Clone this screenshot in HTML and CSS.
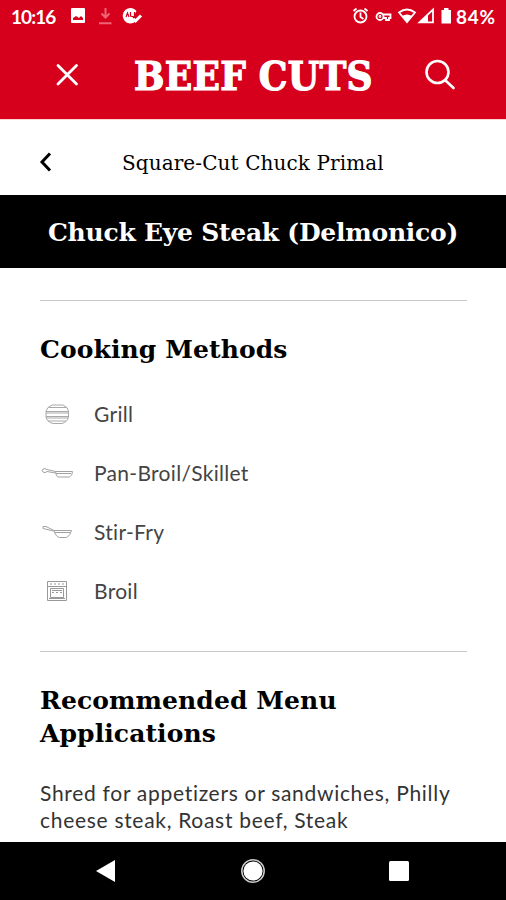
FILE: index.html
```html
<!DOCTYPE html>
<html lang="en">
<head>
<meta charset="utf-8">
<title>Beef Cuts</title>
<link rel="stylesheet" href="styles.css">
</head>
<body>
<div class="screen">
	<header class="header">
		<div class="status">
			<span class="time">10:16</span>
			<svg class="notices" width="76" height="20" viewBox="0 0 76 20">
				<path fill="#fff" fill-rule="evenodd" d="M2 2h12q1 0 1 1v13q0 1-1 1H2q-1 0-1-1V3q0-1 1-1zM3 14h10v-2l-2-2-2 2-3-2-3 2z"/>
				<path fill="none" stroke="#ec6475" stroke-width="2" d="M35.500 2v8M29 17.200h12.500M31.500 7.500l4 4 4-4"/>
				<path fill="#fff" d="M66.500 5a7.700 7.700 0 1 0-1 10.500l-3-3z"/>
				<path fill="none" stroke="#fff" stroke-width="3" d="M62 12l3.500 3 5.500-5.500"/>
				<path fill="none" stroke="#d6001c" stroke-width="1.200" d="M56 11l1.500-4 1.500 4M60.500 6v4l4 1v-5M63 12l3-2.500"/>
			</svg>
			<svg class="signals" width="102" height="20" viewBox="0 0 102 20">
				<g fill="none" stroke="#fff" stroke-width="1.800">
					<circle cx="9.500" cy="10.500" r="6"/>
					<path d="M9.500 6.500v4.500l3 2M2.500 5l3-2.500M16.500 5l-3-2.500"/>
					<circle cx="29" cy="10.500" r="3.500"/>
					<circle cx="29" cy="10.500" r=".5"/>
					<path d="M32 8.500h7.500v3.500h-1.500v2h-3v-2h-3"/>
					<path d="M48 6.500q8-6 16 0l-8 9.500z"/>
					<path d="M82 3.500v12.800H68.500z"/>
				</g>
				<path fill="#fff" d="M51 10q5-3 10 0l-5 6.500zM68 17l9-9v9zM93 2h4.500v2H100v13.500h-9.500V4H93z"/>
			</svg>
			<span class="battery">84%</span>
		</div>
		<div class="bar">
			<svg class="close" width="24" height="24" viewBox="0 0 24 24"><path fill="none" stroke="#fff" stroke-width="2.800" stroke-linecap="round" d="M3 2.500l18.500 18.500M21.500 2.500L3 21"/></svg>
			<h1 class="brand">BEEF CUTS</h1>
			<svg class="search" width="32" height="32" viewBox="0 0 32 32"><g fill="none" stroke="#fff" stroke-width="2.600" stroke-linecap="round"><circle cx="13.500" cy="13" r="11"/><path d="M21.500 21.500l8 7.500"/></g></svg>
		</div>
	</header>
	<div class="crumb">
		<svg class="back" width="14" height="20" viewBox="0 0 14 20"><path fill="none" stroke="#000" stroke-width="3" d="M12 1.500L4 10l8 8.500"/></svg>
		<span class="primal">Square-Cut Chuck Primal</span>
	</div>
	<h2 class="cut">Chuck Eye Steak (Delmonico)</h2>
	<main class="content">
		<section class="block">
			<h3 class="title">Cooking Methods</h3>
			<ul class="methods">
				<li>
					<svg width="34" height="24" viewBox="0 0 34 24"><path fill="none" stroke="#a9a9a9" d="M12 3h11q5 2 5.500 6v6q-1 5-6.500 6.500H13Q7 20 6 15V9q1-4 6-6zM9 5.500h17M6 9.500h22M6 11h22M6 14.500h22M6 16h22M8 19h18"/></svg>
					<span>Grill</span>
				</li>
				<li>
					<svg width="34" height="24" viewBox="0 0 34 24"><path fill="none" stroke="#a2a2a2" d="M15.500 10.500h17q0 4-3 5.500H18q-2-1-2.500-5.500zM15.500 12L7 10.500q-2 2-4 .5t0-3q2-1 4 .5l8.500 2M16 12.500h15"/></svg>
					<span>Pan-Broil/Skillet</span>
				</li>
				<li>
					<svg width="34" height="24" viewBox="0 0 34 24"><path fill="none" stroke="#a2a2a2" d="M14 10.500h17.500q-1 5-5 7h-7q-4-1-5.500-7zM13.500 11L3 8.500V6.500l3 0 8 4M14.500 12.500h16"/></svg>
					<span>Stir-Fry</span>
				</li>
				<li>
					<svg width="34" height="24" viewBox="0 0 34 24"><g fill="none" stroke="#999"><path d="M7.500 2.500h19v19h-19zM7.500 7.500h19M10.500 9.500h13v9h-13zM12 11.500h10M9 19.500h16"/><path stroke-dasharray="2 2" d="M10 5h15M12 13.500h10"/></g></svg>
					<span>Broil</span>
				</li>
			</ul>
		</section>
		<section class="block menu">
			<h3 class="title">Recommended Menu<br>Applications</h3>
			<p class="text">Shred for appetizers or sandwiches, Philly<br>cheese steak, Roast beef, Steak</p>
		</section>
	</main>
	<nav class="navbar">
		<svg width="20" height="22" viewBox="0 0 20 22"><path fill="#fff" d="M0 11L19 0v22z"/></svg>
		<svg width="26" height="26" viewBox="0 0 26 26"><circle cx="13" cy="13" r="11.200" fill="none" stroke="#ccc" stroke-width="1.500"/><circle cx="13" cy="13" r="9.600" fill="#fff"/></svg>
		<svg width="20" height="20" viewBox="0 0 20 20"><rect width="20" height="20" rx="1.500" fill="#fff"/></svg>
	</nav>
</div>
</body>
</html>
```
FILE: styles.css
```css
body,h1,h2,h3,ul,p{margin:0;padding:0;}
body{background:#fff;color:#000;}
svg{display:block;flex:none;}
.screen{width:506px;height:900px;overflow:hidden;display:flex;flex-direction:column;font-family:Lato,sans-serif;font-variant-ligatures:none;}
.header{height:119px;background:#d6001c;color:#fff;flex:none;border-bottom:1px solid #f9d5d5;}
.status{display:flex;align-items:center;height:32px;padding:0 9px 0 11px;font-size:19px;font-weight:bold;white-space:nowrap;}
.time{width:46px;letter-spacing:-.9px;}
.notices{margin:-1px 0 0 13px;}
.signals{margin:-1px 0 0 auto;}
.battery{margin-left:3px;width:41px;letter-spacing:.7px;}
.bar{display:flex;align-items:center;height:86px;padding:0 50px 0 55px;}
.brand,.primal,.cut,.title{font-family:"DejaVu Serif",serif;white-space:nowrap;}
.brand{font-family:"DejaVu Serif Condensed","DejaVu Serif",serif;font-stretch:condensed;font-size:40px;letter-spacing:.3px;line-height:48px;width:240px;margin:1px 0 0 55px;-webkit-text-stroke:1.2px #fff;}
.search{margin-left:auto;}
.crumb{display:flex;align-items:center;height:75px;padding-left:38px;flex:none;}
.crumb .back{margin-top:9px;}
.primal{font-size:20px;line-height:26px;letter-spacing:.1px;margin:10px 0 0 70px;}
.cut{height:73px;line-height:75px;background:#000;color:#fff;text-align:center;font-size:25px;letter-spacing:-.25px;flex:none;}
.content{flex:1;padding:32px 39px 0 40px;min-height:0;}
.block{border-top:1px solid #c9c9c9;height:350px;padding-top:32px;box-sizing:border-box;}
.block.menu{margin-top:1px;}
.title{font-size:25px;line-height:33px;letter-spacing:.1px;}
.methods{list-style:none;padding-top:18px;}
.methods li{display:flex;align-items:center;height:59px;font-size:21px;letter-spacing:.3px;color:#444;}
.methods span{margin-left:20px;}
.text{font-size:21px;line-height:27px;letter-spacing:.7px;color:#333;margin-top:29px;white-space:nowrap;}
.navbar{height:58px;background:#000;flex:none;display:flex;align-items:center;justify-content:space-between;padding:0 97px 0 96px;box-sizing:border-box;}
```
